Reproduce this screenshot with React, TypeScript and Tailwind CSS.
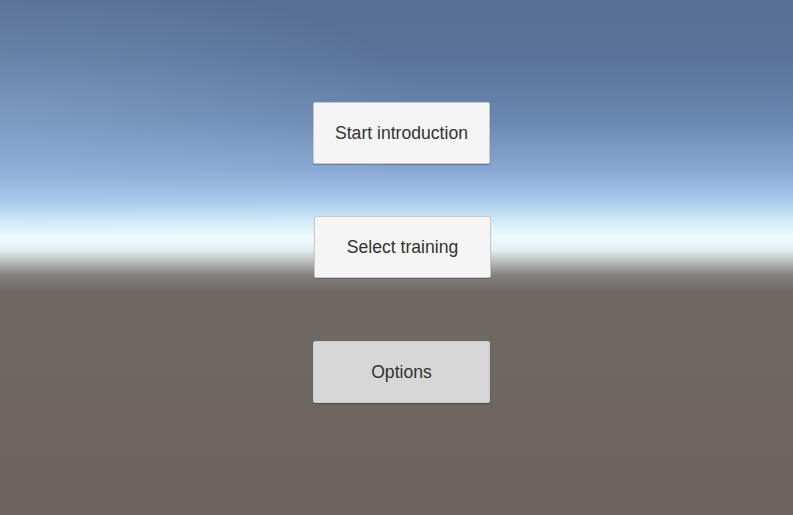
function MenuButton({ label, pressed }: { label: string; pressed?: boolean }) {
  return (
    <button
      className={
        "w-[177px] h-[62px] rounded-[2px] border border-[#c9c9c9] shadow-[0_1px_1px_rgba(0,0,0,0.25)] text-[17.6px] text-[#323232] " +
        (pressed ? "bg-[#d7d7d7]" : "bg-[#f5f5f5]")
      }
      style={{ fontFamily: '"Liberation Sans", Arial, sans-serif' }}
    >
      {label}
    </button>
  );
}

export default function App() {
  return (
    <div className="relative w-[793px] h-[515px] overflow-hidden bg-[linear-gradient(to_bottom,#586f95_0px,#5b7399_60px,#6a87b1_120px,#88a8d4_170px,#a8c8ea_200px,#d4ecf9_222px,#eefcff_238px,#e2eff2_250px,#b8bbbb_262px,#858180_275px,#6f6964_292px,#6b635e_515px)]">
      <div className="absolute left-0 top-0 w-full h-[230px] bg-[radial-gradient(ellipse_55%_60%_at_0%_50%,rgba(170,200,235,0.3),transparent)]" />
      <div className="relative flex flex-col items-center pl-[10px] pt-[102px]">
        <MenuButton label="Start introduction" />
        <div className="mt-[52px] ml-[2px]">
          <MenuButton label="Select training" />
        </div>
        <div className="mt-[63px]">
          <MenuButton label="Options" pressed />
        </div>
      </div>
    </div>
  );
}
